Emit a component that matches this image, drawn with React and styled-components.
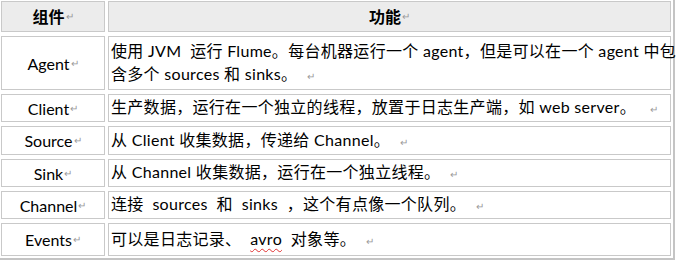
import React from 'react';
import styled, { createGlobalStyle } from 'styled-components';

const GlobalStyle = createGlobalStyle`
  html, body {
    margin: 0;
    padding: 0;
    background: #ffffff;
  }
  body {
    font-family: "Lato", "Noto Sans CJK SC", sans-serif;
  }
`;

const Frame = styled.div`
  width: 671px;
  padding: 1px 1px 2px 1px;
  border-right: 2px solid #c4c4c4;
  border-bottom: 3px solid #c4c4c4;
`;

const Grid = styled.div`
  display: grid;
  grid-template-columns: 104px 563px;
  column-gap: 3px;
  row-gap: 4px;
`;

const Cell = styled.div`
  box-sizing: border-box;
  border: 1px solid #c9c9c9;
  height: ${props => props.h}px;
  display: flex;
  align-items: center;
  justify-content: ${props => (props.center ? 'center' : 'flex-start')};
  padding: 0 2px;
  font-size: 16px;
  line-height: 23px;
  letter-spacing: ${props => (props.center ? '0' : '0.3px')};
  color: #000000;
  white-space: pre;
  background: ${props => (props.head ? '#ececec' : '#ffffff')};
  font-weight: ${props => (props.head ? 700 : 400)};
`;

const Mark = styled.span`
  font-size: 10px;
  color: #9a9a9a;
  font-weight: 400;
  margin-left: 1px;
  letter-spacing: 0;
`;

const Typo = styled.span`
  text-decoration: underline wavy #e03030;
  text-decoration-thickness: 1px;
  text-underline-offset: 3px;
`;

const rows = [
  { name: 'Agent', h: 54, text: (<>使用 JVM  运行 Flume。每台机器运行一个 agent，但是可以在一个 agent 中包<br />含多个 sources 和 sinks。  </>) },
  { name: 'Client', h: 28, text: '生产数据，运行在一个独立的线程，放置于日志生产端，如 web server。   ' },
  { name: 'Source', h: 29, text: '从 Client 收集数据，传递给 Channel。  ' },
  { name: 'Sink', h: 28, text: '从 Channel 收集数据，运行在一个独立线程。  ' },
  { name: 'Channel', h: 28, text: '连接  sources  和  sinks  ，这个有点像一个队列。  ' },
  { name: 'Events', h: 33, text: (<>可以是日志记录、  <Typo>avro</Typo>  对象等。  </>) },
];

export default function App() {
  return (
    <>
      <GlobalStyle />
      <Frame>
        <Grid>
          <Cell head center h={31}>组件<Mark>↵</Mark></Cell>
          <Cell head center h={31}>功能<Mark>↵</Mark></Cell>
          {rows.map(row => (
            <React.Fragment key={row.name}>
              <Cell center h={row.h}>{row.name}<Mark>↵</Mark></Cell>
              <Cell h={row.h}><span>{row.text}<Mark>↵</Mark></span></Cell>
            </React.Fragment>
          ))}
        </Grid>
      </Frame>
    </>
  );
}
